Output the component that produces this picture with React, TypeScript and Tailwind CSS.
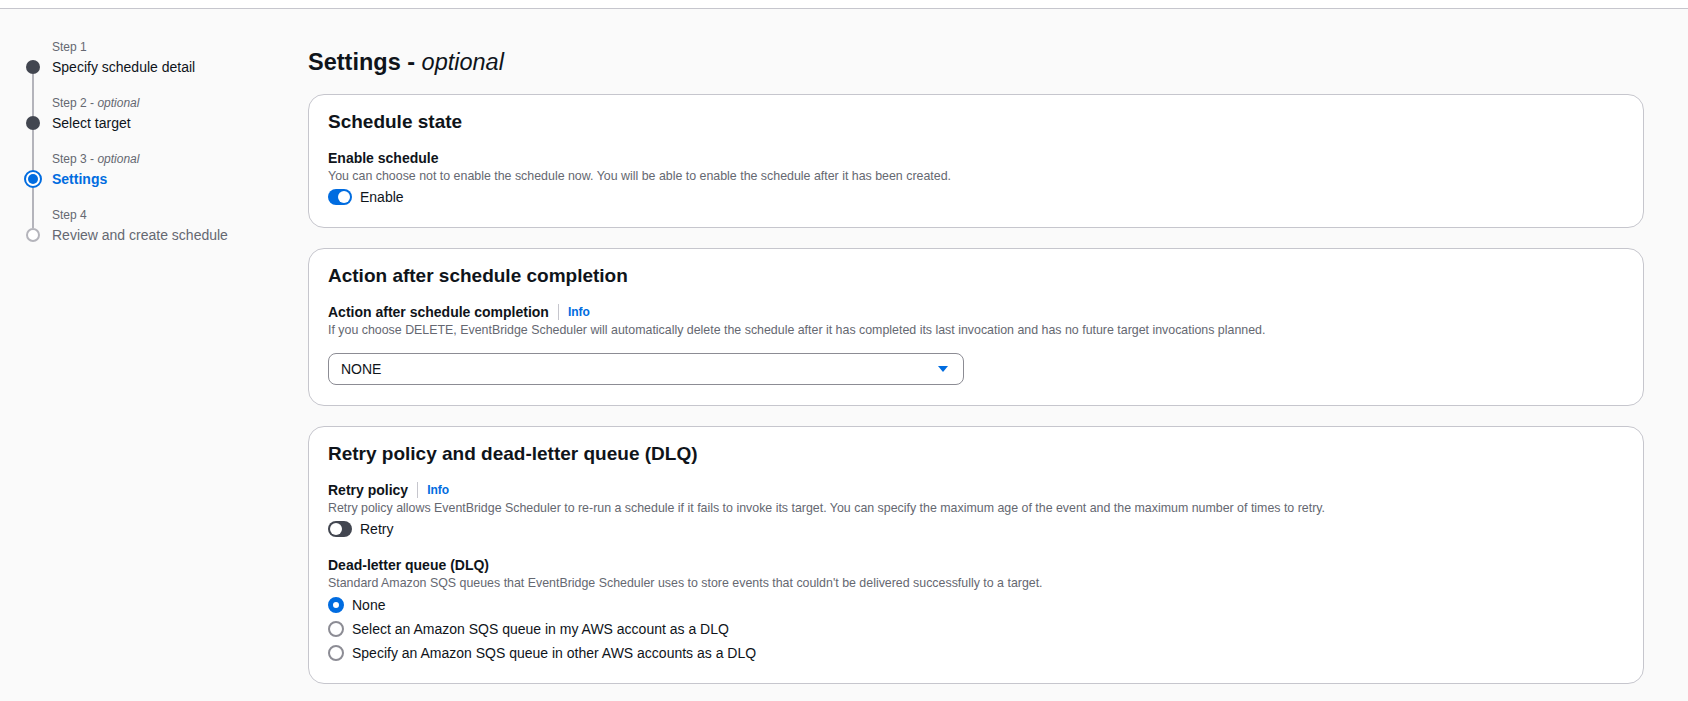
import React from 'react';
import type { ReactNode } from 'react';

type StepState = 'done' | 'active' | 'todo';

const steps: { label: string; optional: boolean; title: string; state: StepState }[] = [
  { label: 'Step 1', optional: false, title: 'Specify schedule detail', state: 'done' },
  { label: 'Step 2', optional: true, title: 'Select target', state: 'done' },
  { label: 'Step 3', optional: true, title: 'Settings', state: 'active' },
  { label: 'Step 4', optional: false, title: 'Review and create schedule', state: 'todo' },
];

const dlqOptions = [
  'None',
  'Select an Amazon SQS queue in my AWS account as a DLQ',
  'Specify an Amazon SQS queue in other AWS accounts as a DLQ',
];

const StepDot: React.FC<{ state: StepState }> = ({ state }) => {
  if (state === 'active') {
    return (
      <div className="flex h-[18px] w-[18px] items-center justify-center rounded-full border-2 border-[#006ce0] bg-white">
        <div className="h-[10px] w-[10px] rounded-full bg-[#006ce0]" />
      </div>
    );
  }
  if (state === 'done') {
    return <div className="h-[14px] w-[14px] rounded-full bg-[#424650]" />;
  }
  return <div className="h-[14px] w-[14px] rounded-full border-2 border-[#b4b4bb] bg-white" />;
};

const Panel: React.FC<{ title: string; children: ReactNode }> = ({ title, children }) => (
  <section className="rounded-2xl border border-[#c6c6cd] bg-white px-[19px] pt-4 pb-5">
    <h2 className="text-[19px] leading-[22px] font-bold text-[#0f141a]">{title}</h2>
    {children}
  </section>
);

const FieldLabel: React.FC<{ text: string; info?: boolean; className?: string }> = ({ text, info, className }) => (
  <div className={`flex h-5 items-center ${className ?? ''}`}>
    <span className="text-sm leading-5 font-bold text-[#0f141a]">{text}</span>
    {info && (
      <>
        <span className="mx-[9px] h-4 w-px bg-[#c6c6cd]" />
        <span className="text-xs leading-4 font-bold text-[#006ce0]">Info</span>
      </>
    )}
  </div>
);

const Desc: React.FC<{ children: ReactNode }> = ({ children }) => (
  <p className="text-[12.4px] leading-4 text-[#656871]">{children}</p>
);

const Toggle: React.FC<{ on: boolean; label: string }> = ({ on, label }) => (
  <div className="mt-[3px] flex h-5 items-center">
    <div
      className={`flex h-4 w-6 items-center rounded-full p-[2px] ${
        on ? 'justify-end bg-[#006ce0]' : 'justify-start bg-[#424650]'
      }`}
    >
      <div className="h-3 w-3 rounded-full bg-white" />
    </div>
    <span className="ml-2 text-sm leading-5 text-[#0f141a]">{label}</span>
  </div>
);

export default function App() {
  return (
    <div className="min-h-screen bg-[#fafafa] font-['Liberation_Sans',Arial,sans-serif] text-[#0f141a]">
      <div className="h-[9px] border-b border-[#c6c6cd] bg-white" />
      <div className="flex">
        <aside className="w-[308px] shrink-0 pt-[30px] pl-[23px]">
          {steps.map((step, i) => {
            const last = i === steps.length - 1;
            const big = step.state === 'active';
            return (
              <div key={step.label} className="flex">
                <div className="flex w-5 flex-col items-center">
                  <div className={`${big ? 'h-[19px]' : 'h-[21px]'} w-[2px] ${i > 0 ? 'bg-[#b4b4bb]' : ''}`} />
                  <StepDot state={step.state} />
                  {!last && <div className={`${big ? 'h-[19px]' : 'h-[21px]'} w-[2px] bg-[#b4b4bb]`} />}
                </div>
                <div className="ml-[9px]">
                  <div className="text-xs leading-4 text-[#656871]">
                    {step.label}
                    {step.optional && (
                      <>
                        {' - '}
                        <i>optional</i>
                      </>
                    )}
                  </div>
                  <div
                    className={`mt-[2px] text-sm leading-5 ${
                      step.state === 'active'
                        ? 'font-bold text-[#006ce0]'
                        : step.state === 'done'
                          ? 'text-[#0f141a]'
                          : 'text-[#656871]'
                    }`}
                  >
                    {step.title}
                  </div>
                </div>
              </div>
            );
          })}
        </aside>

        <main className="flex-1 pt-[38px] pr-[44px] pb-4">
          <h1 className="text-[23.5px] leading-[30px] font-bold text-[#0f141a]">
            Settings - <i className="font-normal">optional</i>
          </h1>

          <div className="mt-[17px] flex flex-col gap-5">
            <Panel title="Schedule state">
              <FieldLabel text="Enable schedule" className="mt-[15px]" />
              <Desc>
                You can choose not to enable the schedule now. You will be able to enable the schedule after it has
                been created.
              </Desc>
              <Toggle on label="Enable" />
            </Panel>

            <Panel title="Action after schedule completion">
              <FieldLabel text="Action after schedule completion" info className="mt-[15px]" />
              <Desc>
                If you choose DELETE, EventBridge Scheduler will automatically delete the schedule after it has
                completed its last invocation and has no future target invocations planned.
              </Desc>
              <div className="mt-[15px] flex h-8 w-[636px] items-center justify-between rounded-lg border border-[#8c8c94] pr-3 pl-3">
                <span className="text-sm leading-5 text-[#0f141a]">NONE</span>
                <svg width="16" height="16" viewBox="0 0 16 16">
                  <polygon points="3,5 13,5 8,11" fill="#006ce0" />
                </svg>
              </div>
            </Panel>

            <Panel title="Retry policy and dead-letter queue (DLQ)">
              <FieldLabel text="Retry policy" info className="mt-[15px]" />
              <Desc>
                Retry policy allows EventBridge Scheduler to re-run a schedule if it fails to invoke its target. You can
                specify the maximum age of the event and the maximum number of times to retry.
              </Desc>
              <Toggle on={false} label="Retry" />

              <FieldLabel text="Dead-letter queue (DLQ)" className="mt-4" />
              <Desc>
                Standard Amazon SQS queues that EventBridge Scheduler uses to store events that couldn't be delivered
                successfully to a target.
              </Desc>
              <div className="mt-1 flex flex-col gap-1">
                {dlqOptions.map((opt, i) => (
                  <div key={opt} className="flex h-5 items-center">
                    <div
                      className={`h-4 w-4 rounded-full bg-white ${
                        i === 0 ? 'border-[5px] border-[#006ce0]' : 'border-2 border-[#8c8c94]'
                      }`}
                    />
                    <span className="ml-2 text-sm leading-5 text-[#0f141a]">{opt}</span>
                  </div>
                ))}
              </div>
            </Panel>
          </div>
        </main>
      </div>
    </div>
  );
}
